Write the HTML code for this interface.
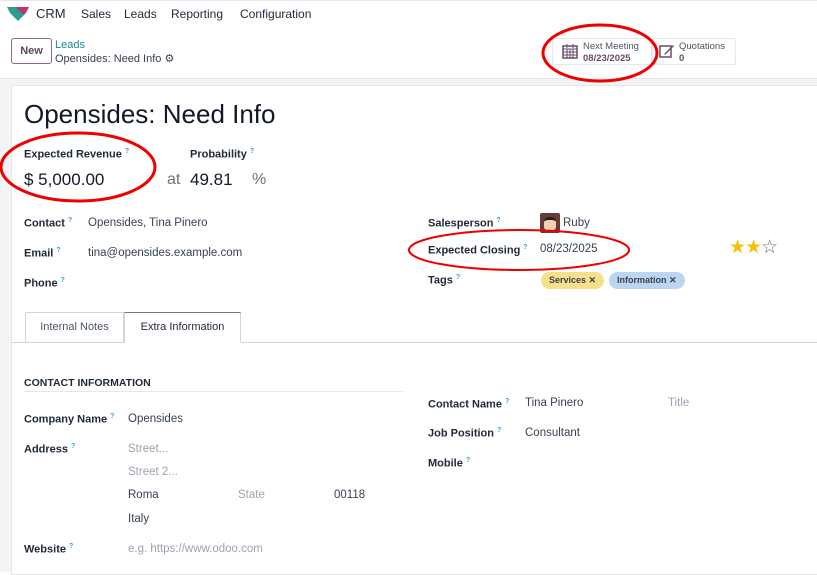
<!DOCTYPE html>
<html><head><meta charset="utf-8"><style>
*{box-sizing:border-box;margin:0;padding:0}
body{width:817px;height:572px;overflow:hidden;background:#fff;font-family:"Liberation Sans",sans-serif;color:#374151;position:relative;font-size:11px}
.a{position:absolute;white-space:nowrap}
.lbl{font-weight:bold;color:#1f2937;font-size:11px}
.q{color:#3aa0c8;font-size:7px;vertical-align:super;font-weight:bold;margin-left:3px}
.v{color:#374151;font-size:11.5px}
.ph{color:#9ca3af;font-size:11.5px}
</style></head><body>
<div class="a" style="left:0;top:0;width:817px;height:1px;background:#e5e7eb"></div>
<svg class="a" style="left:7px;top:7px" width="22" height="14" viewBox="0 0 22 14"><path d="M0 0 L22 0 L19 6 L11 14 L3 6Z" fill="#2b9e8f"/><path d="M8 0 L22 0 L17 8 Z" fill="#c2346e"/></svg>
<div class="a" style="left:36px;top:6px;font-size:13px;color:#1f2937">CRM</div>
<div class="a" style="left:81px;top:7px;font-size:12px;color:#1f2937">Sales</div>
<div class="a" style="left:124px;top:7px;font-size:12px;color:#1f2937">Leads</div>
<div class="a" style="left:171px;top:7px;font-size:12px;color:#1f2937">Reporting</div>
<div class="a" style="left:240px;top:7px;font-size:12px;color:#1f2937">Configuration</div>
<div class="a" style="left:11px;top:38px;width:41px;height:26px;border:1px solid #8b6a8b;border-radius:3px;font-weight:bold;color:#5b4a5b;font-size:11px;text-align:center;line-height:24px">New</div>
<div class="a" style="left:55px;top:39px;color:#1b8a8c;font-size:11px">Leads</div>
<div class="a" style="left:55px;top:52px;color:#374151;font-size:11px">Opensides: Need Info ⚙</div>
<div class="a" style="left:552px;top:38px;width:100px;height:27px;border:1px solid #e5e7eb;border-radius:2px"></div>
<svg class="a" style="left:562px;top:43px" width="16" height="16" viewBox="0 0 16 16"><rect x="1" y="3" width="14" height="12" fill="none" stroke="#6b4a6b" stroke-width="1.5"/><path d="M1 6h14M5 1v4M11 1v4M1 9h14M1 12h14M5 6v9M8 6v9M11 6v9" stroke="#6b4a6b" stroke-width="1"/></svg>
<div class="a" style="left:583px;top:41px;font-size:9.5px;color:#4b5563">Next Meeting</div>
<div class="a" style="left:583px;top:53px;font-size:9.5px;font-weight:bold;color:#6b4a6b">08/23/2025</div>
<div class="a" style="left:652px;top:38px;width:84px;height:27px;border:1px solid #e5e7eb;border-radius:2px"></div>
<svg class="a" style="left:659px;top:43px" width="16" height="16" viewBox="0 0 16 16"><rect x="1" y="3" width="11" height="11" fill="none" stroke="#6b4a6b" stroke-width="1.5"/><path d="M6 10 L14 2 L15 3 L7 11 L5 12Z" fill="#6b4a6b"/></svg>
<div class="a" style="left:679px;top:41px;font-size:9.5px;color:#4b5563">Quotations</div>
<div class="a" style="left:679px;top:53px;font-size:9.5px;font-weight:bold;color:#6b4a6b">0</div>
<div class="a" style="left:0;top:78px;width:817px;height:494px;background:#f3f4f6;border-top:1px solid #e5e7eb"></div>
<div class="a" style="left:11px;top:85px;width:810px;height:490px;background:#fff;border:1px solid #e5e7eb"></div>
<div class="a" style="left:24px;top:99px;font-size:26px;color:#111827">Opensides: Need Info</div>
<div class="a lbl" style="left:24px;top:148px">Expected Revenue<span class="q">?</span></div>
<div class="a lbl" style="left:190px;top:148px">Probability<span class="q">?</span></div>
<div class="a" style="left:24px;top:170px;font-size:17px;color:#111827">$ 5,000.00</div>
<div class="a" style="left:167px;top:171px;font-size:16px;color:#6b7280">at</div>
<div class="a" style="left:190px;top:170px;font-size:17px;color:#111827">49.81</div>
<div class="a" style="left:252px;top:171px;font-size:16px;color:#6b7280">%</div>
<div class="a lbl" style="left:24px;top:217px">Contact<span class="q">?</span></div>
<div class="a v" style="left:88px;top:217px">Opensides, Tina Pinero</div>
<div class="a lbl" style="left:24px;top:247px">Email<span class="q">?</span></div>
<div class="a v" style="left:88px;top:247px">tina@opensides.example.com</div>
<div class="a lbl" style="left:24px;top:277px">Phone<span class="q">?</span></div>
<div class="a lbl" style="left:428px;top:217px">Salesperson<span class="q">?</span></div>
<div class="a" style="left:540px;top:213px;width:20px;height:20px;background:#6b3a3a;border-radius:2px"><div style="margin:4px 4px;width:12px;height:13px;background:#f3d2b0;border-radius:5px 5px 3px 3px;border-top:3px solid #222"></div></div>
<div class="a v" style="left:563px;top:217px">Ruby</div>
<div class="a lbl" style="left:428px;top:244px">Expected Closing<span class="q">?</span></div>
<div class="a v" style="left:540px;top:243px">08/23/2025</div>
<div class="a" style="left:729px;top:236px;font-size:19px;color:#f3c00f;letter-spacing:-1px">★★<span style="color:#6b7280">☆</span></div>
<div class="a lbl" style="left:428px;top:274px">Tags<span class="q">?</span></div>
<div class="a" style="left:541px;top:272px;height:17px;padding:0 8px;background:#f7e08a;border-radius:9px;font-size:9px;font-weight:bold;color:#374151;line-height:17px">Services ✕</div>
<div class="a" style="left:609px;top:272px;height:17px;padding:0 8px;background:#bcd6f2;border-radius:9px;font-size:9px;font-weight:bold;color:#374151;line-height:17px">Information ✕</div>
<div class="a" style="left:12px;top:342px;width:805px;height:1px;background:#d1d5db"></div>
<div class="a" style="left:25px;top:312px;width:99px;height:31px;border:1px solid #d1d5db;border-bottom:none;color:#4b5563;font-size:11px;text-align:center;line-height:29px">Internal Notes</div>
<div class="a" style="left:124px;top:312px;width:117px;height:31px;border:1px solid #d1d5db;border-top:1px solid #8b6a8b;border-bottom:1px solid #fff;background:#fff;color:#1f2937;font-size:11px;text-align:center;line-height:29px">Extra Information</div>
<div class="a lbl" style="left:24px;top:377px;font-size:10.5px">CONTACT INFORMATION</div>
<div class="a" style="left:24px;top:391px;width:379px;height:1px;background:#e5e7eb"></div>
<div class="a lbl" style="left:24px;top:413px">Company Name<span class="q">?</span></div>
<div class="a v" style="left:128px;top:413px">Opensides</div>
<div class="a lbl" style="left:24px;top:443px">Address<span class="q">?</span></div>
<div class="a ph" style="left:128px;top:443px">Street...</div>
<div class="a ph" style="left:128px;top:466px">Street 2...</div>
<div class="a v" style="left:128px;top:489px">Roma</div>
<div class="a ph" style="left:238px;top:489px">State</div>
<div class="a v" style="left:334px;top:489px">00118</div>
<div class="a v" style="left:128px;top:513px">Italy</div>
<div class="a lbl" style="left:24px;top:543px">Website<span class="q">?</span></div>
<div class="a ph" style="left:128px;top:543px">e.g. https://www.odoo.com</div>
<div class="a lbl" style="left:428px;top:398px">Contact Name<span class="q">?</span></div>
<div class="a v" style="left:525px;top:397px">Tina Pinero</div>
<div class="a ph" style="left:668px;top:397px">Title</div>
<div class="a lbl" style="left:428px;top:427px">Job Position<span class="q">?</span></div>
<div class="a v" style="left:525px;top:427px">Consultant</div>
<div class="a lbl" style="left:428px;top:457px">Mobile<span class="q">?</span></div>
<svg class="a" style="left:0;top:0" width="817" height="572"><g fill="none" stroke="#e00" stroke-width="3"><ellipse cx="600" cy="53" rx="57" ry="28"/><ellipse cx="78" cy="167" rx="77" ry="34"/></g><ellipse cx="519" cy="250" rx="110" ry="20" fill="none" stroke="#e00" stroke-width="2"/></svg>
</body></html>
